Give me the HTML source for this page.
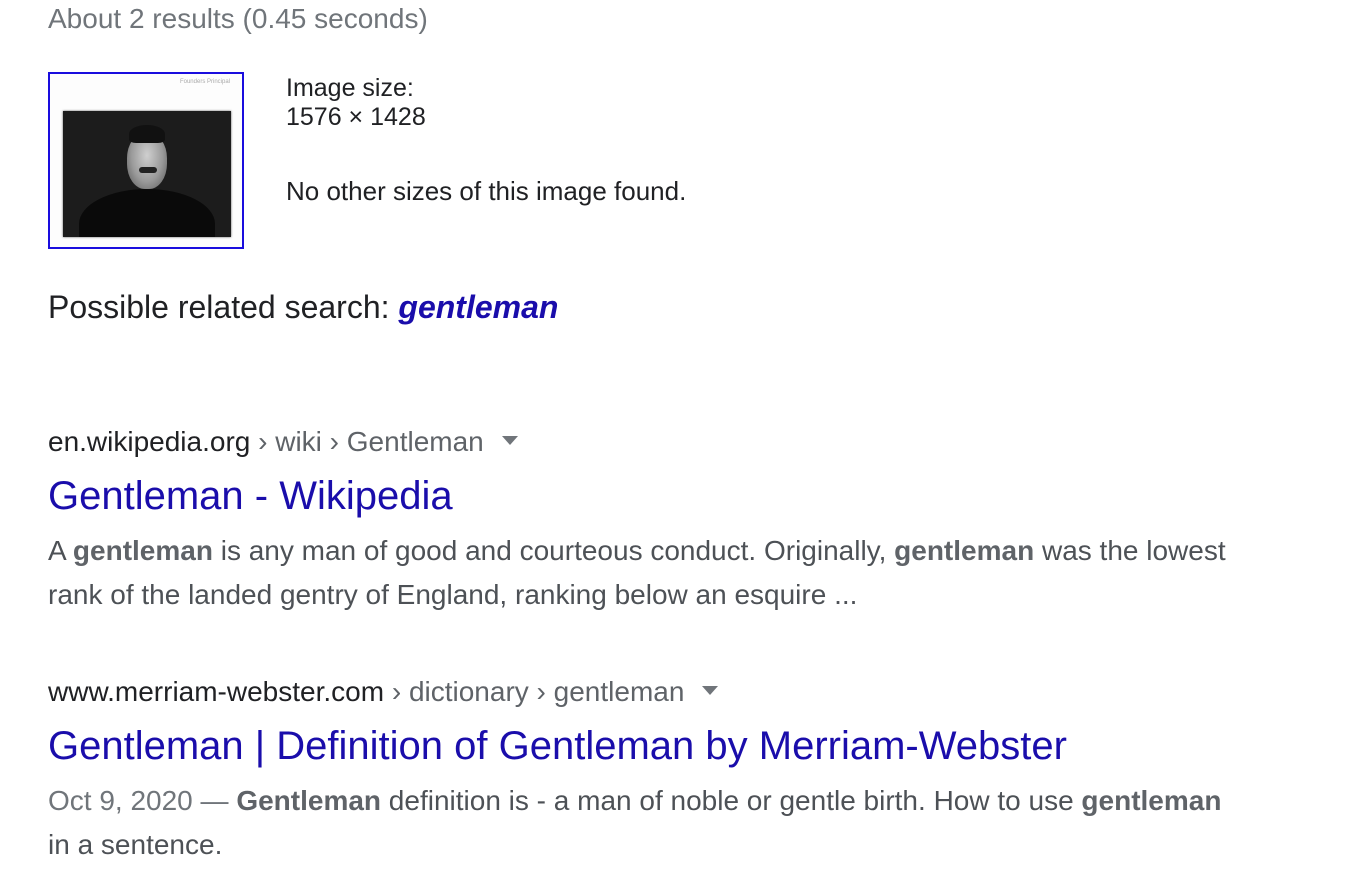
<!DOCTYPE html>
<html><head><meta charset="utf-8"><style>
body{margin:0;width:1348px;height:888px;background:#fff;font-family:"Liberation Sans",Arial,sans-serif;position:relative;overflow:hidden}
.a{position:absolute;white-space:nowrap}
.g{color:#70757a}
.s{color:#4d5156;font-size:28px}
.s b{color:#5f6368}
.t{color:#1a0dab;font-size:40px}
.u{font-size:28px;color:#202124}
.u span{color:#5f6368}
.tri{display:inline-block;width:0;height:0;border-left:8px solid transparent;border-right:8px solid transparent;border-top:9px solid #70757a;margin-left:18px;vertical-align:middle;position:relative;top:-3px}
</style></head><body>
<div class="a g" style="left:48px;top:3px;font-size:28px">About 2 results (0.45 seconds)</div>
<div class="a" style="left:48px;top:72px;width:192px;height:173px;border:2px solid #1a0dde;background:#fdfdfd">
 <div style="position:absolute;right:12px;top:5px;font-size:6px;color:#aaa">Founders Principal</div>
 <div style="position:absolute;left:13px;top:37px;width:168px;height:126px;background:#1c1c1c;box-shadow:0 0 2px #555;overflow:hidden">
  <div style="position:absolute;left:64px;top:22px;width:40px;height:56px;border-radius:45%;background:radial-gradient(ellipse at 50% 40%,#cfcfcf 0,#9a9a9a 55%,#555 100%)"></div>
  <div style="position:absolute;left:66px;top:14px;width:36px;height:18px;border-radius:50% 50% 20% 20%;background:#111"></div>
  <div style="position:absolute;left:76px;top:56px;width:18px;height:6px;border-radius:4px;background:#222"></div>
  <div style="position:absolute;left:16px;top:78px;width:136px;height:70px;border-radius:50% 50% 0 0;background:#0a0a0a"></div>
 </div>
</div>
<div class="a" style="left:286px;top:74px;font-size:25px;color:#202124;line-height:29px">Image size:<br>1576 × 1428</div>
<div class="a" style="left:286px;top:176px;font-size:26px;color:#202124">No other sizes of this image found.</div>
<div class="a" style="left:48px;top:289px;font-size:32px;color:#202124">Possible related search: <i style="color:#1a0dab;font-weight:bold">gentleman</i></div>

<div class="a u" style="left:48px;top:426px">en.wikipedia.org<span> › wiki › Gentleman</span><i class="tri"></i></div>
<div class="a t" style="left:48px;top:474px">Gentleman - Wikipedia</div>
<div class="a s" style="left:48px;top:535px">A <b>gentleman</b> is any man of good and courteous conduct. Originally, <b>gentleman</b> was the lowest</div>
<div class="a s" style="left:48px;top:579px">rank of the landed gentry of England, ranking below an esquire ...</div>

<div class="a u" style="left:48px;top:676px">www.merriam-webster.com<span> › dictionary › gentleman</span><i class="tri"></i></div>
<div class="a t" style="left:48px;top:724px">Gentleman | Definition of Gentleman by Merriam-Webster</div>
<div class="a s" style="left:48px;top:785px"><span style="color:#70757a">Oct 9, 2020 — </span><b>Gentleman</b> definition is - a man of noble or gentle birth. How to use <b>gentleman</b></div>
<div class="a s" style="left:48px;top:829px">in a sentence.</div>
</body></html>
